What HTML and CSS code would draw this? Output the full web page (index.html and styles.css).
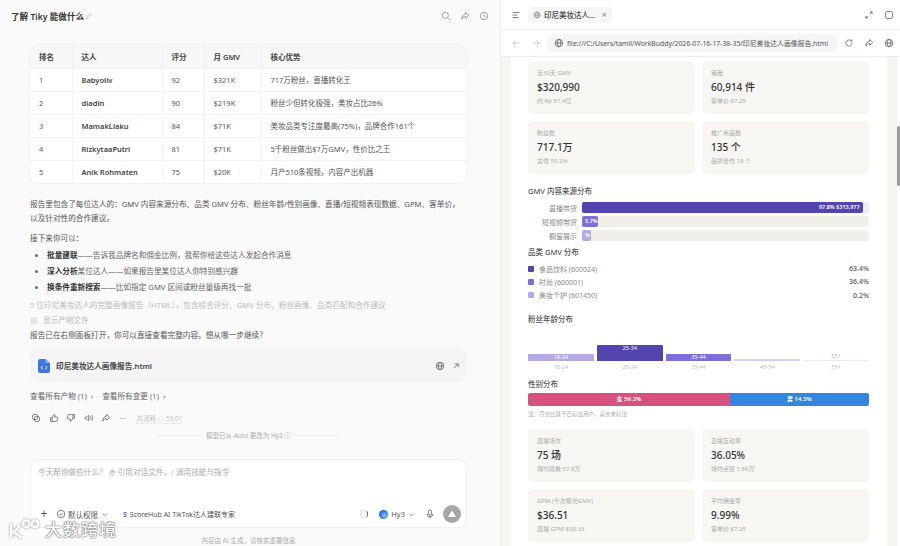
FILE: index.html
```html
<!DOCTYPE html>
<html lang="zh-CN">
  <head>
    <meta charset="UTF-8" />
    <title>了解 Tiky 能做什么</title>
    <link rel="stylesheet" href="styles.css">
  </head>
  <body>
    <div class="app">
      <section class="chat">
        <header class="chat-head">
          <div class="chat-title">
            <span>了解 Tiky 能做什么</span>
            <svg class="ico-sm" viewBox="0 0 16 16"><path d="M3 13l1-3.500L11 2.500l2.500 2.500-7 7z"/></svg>
          </div>
          <div class="head-icons">
            <svg class="ico" viewBox="0 0 16 16"><circle cx="7" cy="7" r="4.800"/><path d="M10.500 10.500L14 14"/></svg>
            <svg class="ico" viewBox="0 0 16 16"><path d="M9 2.500l5 4.500-5 4.500V9C6 9 4.500 10 3 13c0-4.500 2-7.500 6-8z"/></svg>
            <svg class="ico" viewBox="0 0 16 16"><circle cx="8" cy="8" r="6"/><path d="M8 4.500V8l2.500 1.500"/></svg>
          </div>
        </header>

        <div class="chat-body">
          <div class="table-wrap">
            <table class="rank">
              <thead>
                <tr><th class="c1">排名</th><th class="c2">达人</th><th class="c3">评分</th><th class="c4">月 GMV</th><th>核心优势</th></tr>
              </thead>
              <tbody>
                <tr><td>1</td><td class="name">Babyoliv</td><td>92</td><td>$321K</td><td>717万粉丝，直播转化王</td></tr>
                <tr><td>2</td><td class="name">diadin</td><td>90</td><td>$219K</td><td>粉丝少但转化极强，美妆占比26%</td></tr>
                <tr><td>3</td><td class="name">MamakLiaku</td><td>84</td><td>$71K</td><td>美妆品类专注度最高(75%)，品牌合作161个</td></tr>
                <tr><td>4</td><td class="name">RizkytaaPutri</td><td>81</td><td>$71K</td><td>5千粉丝做出$7万GMV，性价比之王</td></tr>
                <tr><td>5</td><td class="name">Anik Rohmaten</td><td>75</td><td>$20K</td><td>月产510条视频，内容产出机器</td></tr>
              </tbody>
            </table>
          </div>

          <p class="para">报告里包含了每位达人的：GMV 内容来源分布、品类 GMV 分布、粉丝年龄/性别画像、直播/短视频表现数据、GPM、客单价，以及针对性的合作建议。</p>
          <p class="next">接下来你可以：</p>
          <ul class="todo">
            <li><b>批量建联</b>——告诉我品牌名和佣金比例，我帮你给这些达人发起合作消息</li>
            <li><b>深入分析</b>某位达人——如果报告里某位达人你特别感兴趣</li>
            <li><b>换条件重新搜索</b>——比如指定 GMV 区间或粉丝量级再找一批</li>
          </ul>
          <p class="muted first">5 位印尼美妆达人的完整画像报告（HTML），包含综合评分、GMV 分布、粉丝画像、品类匹配和合作建议</p>
          <p class="muted show">
            <svg class="ico-sm" viewBox="0 0 16 16"><circle cx="8" cy="8" r="6"/><circle cx="8" cy="8" r="2.500"/></svg>
            <span>显示产物文件</span>
          </p>
          <p class="ask">报告已在右侧面板打开，你可以直接查看完整内容。想从哪一步继续？</p>

          <div class="file-card">
            <svg class="file-ico" viewBox="0 0 12 14"><path d="M2 0h5.500L12 4v8a2 2 0 0 1-2 2H2a2 2 0 0 1-2-2V2a2 2 0 0 1 2-2z" fill="#3f74d8"/><path d="M7.500 0L12 4H7.500z" fill="#8fb0ec"/><path d="M4.600 7L3.200 8.700l1.400 1.700M7.400 7l1.400 1.700-1.400 1.700" fill="none" stroke="#fff" stroke-width="1"/></svg>
            <span class="file-name">印尼美妆达人画像报告.html</span>
            <svg class="ico" viewBox="0 0 16 16"><circle cx="8" cy="8" r="6"/><ellipse cx="8" cy="8" rx="2.600" ry="6"/><path d="M2 8h12"/></svg>
            <svg class="ico" viewBox="0 0 16 16"><path d="M4.500 11.500L11.500 4.500M6 4.500h5.500V10"/></svg>
          </div>

          <div class="links">
            <span>查看所有产物 (1) &nbsp;›</span>
            <span>查看所有变更 (1) &nbsp;›</span>
          </div>

          <div class="actions">
            <svg class="ico" viewBox="0 0 16 16"><rect x="2.500" y="2.500" width="8" height="8" rx="2"/><rect x="5.500" y="5.500" width="8" height="8" rx="2"/></svg>
            <svg class="ico" viewBox="0 0 16 16"><path d="M2.500 7.500h2.500v6H2.500zM5 7.500L8 2.500c1.300 0 1.800 1 1.500 2L9 6.500h4c.8 0 1.200.7 1 1.500l-1.200 4.500c-.2.700-.6 1-1.300 1H5"/></svg>
            <svg class="ico" viewBox="0 0 16 16"><path d="M13.500 8.500H11v-6h2.500zM11 8.500L8 13.500c-1.300 0-1.800-1-1.500-2l.5-2H3c-.8 0-1.200-.7-1-1.500l1.200-4.500c.2-.7.600-1 1.300-1H11"/></svg>
            <svg class="ico" viewBox="0 0 16 16"><path d="M2 6.500v3h2L7.500 12.500v-9L4 6.500zM10 5.500c1 1.500 1 3.500 0 5M12.500 3.500c1.800 2.700 1.800 6.300 0 9"/></svg>
            <svg class="ico" viewBox="0 0 16 16"><path d="M9 2.500l5 4.500-5 4.500V9C6 9 4.500 10 3 13c0-4.500 2-7.500 6-8z"/></svg>
            <span class="dots">···</span>
            <span class="cost">共消耗 ◇ 59.01</span>
          </div>

          <div class="model-note">
            <i></i><span>模型已从 Auto 更改为 Hy3 ⓘ</span><i></i>
          </div>

          <div class="composer">
            <div class="hint">今天帮你做些什么？ @ 引用对话文件，/ 调用技能与指令</div>
            <div class="tools">
              <span class="plus">+</span>
              <svg class="ico" viewBox="0 0 16 16"><circle cx="8" cy="8" r="6"/><path d="M5.500 8l2 2 3-3.500"/></svg>
              <span class="tool-txt">默认权限</span>
              <svg class="chev" viewBox="0 0 8 8"><path d="M1.500 3l2.500 2.500L6.500 3"/></svg>
              <span class="skill"><b>S</b>ScoreHub AI TikTok达人建联专家</span>
              <span class="spin"></span>
              <span class="orb"></span>
              <span class="tool-txt">Hy3</span>
              <svg class="chev" viewBox="0 0 8 8"><path d="M1.500 3l2.500 2.500L6.500 3"/></svg>
              <svg class="ico mic" viewBox="0 0 16 16"><rect x="5.500" y="1.500" width="5" height="8.500" rx="2.500"/><path d="M3.500 8c0 3 2 4.500 4.500 4.500s4.500-1.500 4.500-4.500M8 12.500v2"/></svg>
              <span class="send"><svg viewBox="0 0 10 10"><path d="M5 1.500L9 8H1z"/></svg></span>
            </div>
          </div>
          <div class="foot-note">内容由 AI 生成，请核实重要信息</div>
        </div>

        <div class="mark">
          <svg viewBox="0 0 34 22"><path d="M3 6v15M3 15c4-1 7-4 9-8M5 15c3 1 6 3 9 6"/><circle cx="19" cy="6" r="3.500"/><circle cx="28" cy="6" r="3.500"/></svg>
          <span>大数跨境</span>
        </div>
      </section>

      <section class="viewer">
        <div class="tabbar">
          <svg class="ico" viewBox="0 0 16 16"><path d="M2.500 4h11M2.500 8h7.500M2.500 12h9.500"/></svg>
          <div class="tab">
            <svg class="ico-sm" viewBox="0 0 16 16"><circle cx="8" cy="8" r="6"/><ellipse cx="8" cy="8" rx="2.600" ry="6"/><path d="M2 8h12"/></svg>
            <span>印尼美妆达人...</span>
            <em>×</em>
          </div>
          <svg class="ico push" viewBox="0 0 16 16"><path d="M3 9.500v3.500h3.500M3 13l3.500-3.500M13 6.500V3H9.500M13 3L9.500 6.500"/></svg>
          <svg class="ico" viewBox="0 0 16 16"><rect x="2.500" y="2.500" width="11" height="11" rx="2.500"/></svg>
        </div>
        <div class="urlbar">
          <svg class="ico faint" viewBox="0 0 16 16"><path d="M13 8H3M7 4L3 8l4 4"/></svg>
          <svg class="ico faint" viewBox="0 0 16 16"><path d="M3 8h10M9 4l4 4-4 4"/></svg>
          <div class="url">
            <svg class="ico" viewBox="0 0 16 16"><circle cx="8" cy="8" r="6"/><ellipse cx="8" cy="8" rx="2.600" ry="6"/><path d="M2 8h12"/></svg>
            <span>file:///C:/Users/tamil/WorkBuddy/2026-07-16-17-38-35/印尼美妆达人画像报告.html</span>
          </div>
          <svg class="ico" viewBox="0 0 16 16"><path d="M13 8a5 5 0 1 1-1.500-3.600M13 2v3h-3"/></svg>
          <svg class="ico" viewBox="0 0 16 16"><path d="M9 2.500l5 4.500-5 4.500V9C6 9 4.500 10 3 13c0-4.500 2-7.500 6-8z"/></svg>
          <svg class="ico" viewBox="0 0 16 16"><circle cx="8" cy="8" r="6"/><ellipse cx="8" cy="8" rx="2.600" ry="6"/><path d="M2 8h12"/></svg>
        </div>

        <div class="report-scroll">
          <div class="report">
            <div class="stats">
              <div class="stat"><label>近30天 GMV</label><strong>$320,990</strong><small>约 Rp 51.4亿</small></div>
              <div class="stat"><label>销量</label><strong>60,914 件</strong><small>客单价 $7.25</small></div>
              <div class="stat"><label>粉丝数</label><strong>717.1万</strong><small>女性 59.2%</small></div>
              <div class="stat"><label>推广商品数</label><strong>135 个</strong><small>品牌合作 18 个</small></div>
            </div>

            <h3 class="h-gmv">GMV 内容来源分布</h3>
            <div class="src-row"><span>直播带货</span><div class="track"><div class="fill c-dark" style="width:97.8%">97.8% $313,977</div></div></div>
            <div class="src-row"><span>短视频带货</span><div class="track"><div class="fill c-mid" style="width:5.7%">5.7%</div></div></div>
            <div class="src-row"><span>橱窗展示</span><div class="track"><div class="fill c-light" style="width:3%">%</div></div></div>

            <h3 class="h-cat">品类 GMV 分布</h3>
            <div class="cat"><i class="c-dark"></i><span>食品饮料 (600024)</span><b>63.4%</b></div>
            <div class="cat"><i class="c-mid"></i><span>时尚 (600001)</span><b>36.4%</b></div>
            <div class="cat"><i class="c-light"></i><span>美妆个护 (601450)</span><b>0.2%</b></div>

            <h3 class="h-age">粉丝年龄分布</h3>
            <div class="ages">
              <div class="age"><div class="col c-light" style="height:7px">18-24</div><span>18-24</span></div>
              <div class="age"><div class="col c-dark" style="height:16px">25-34</div><span>25-34</span></div>
              <div class="age"><div class="col c-mid" style="height:7px">35-44</div><span>35-44</span></div>
              <div class="age"><div class="col c-pale" style="height:2px"></div><span>45-54</span></div>
              <div class="age"><em>55+</em><div class="col c-paler" style="height:1px"></div><span>55+</span></div>
            </div>

            <h3 class="h-sex">性别分布</h3>
            <div class="sex">
              <div class="female" style="width:59.2%">女 59.2%</div>
              <div class="male">男 14.5%</div>
            </div>
            <p class="sex-note">注：百分比基于已标注用户，其余未标注</p>

            <div class="stats">
              <div class="stat"><label>直播场次</label><strong>75 场</strong><small>场均观看 57.8万</small></div>
              <div class="stat"><label>直播互动率</label><strong>36.05%</strong><small>场均点赞 1.86万</small></div>
              <div class="stat"><label>GPM (千次曝光GMV)</label><strong>$36.51</strong><small>直播 GPM $38.33</small></div>
              <div class="stat"><label>平均佣金率</label><strong>9.99%</strong><small>客单价 $7.25</small></div>
            </div>
          </div>
          <div class="scrollbar"><div class="thumb"></div></div>
        </div>
      </section>
    </div>
  </body>
</html>
```

FILE: styles.css
```css
* {
  box-sizing: border-box;
  margin: 0;
  padding: 0;
}

html,
body {
  width: 900px;
  height: 546px;
  overflow: hidden;
}

body {
  background-color: #fafafa;
  color: #333;
  font-family: "Noto Sans", "Noto Sans CJK SC", sans-serif;
  font-size: 8px;
}

.app {
  display: flex;
  height: 546px;
}

svg {
  fill: none;
  stroke: currentColor;
  flex-shrink: 0;
}

.ico {
  width: 10px;
  height: 10px;
  stroke-width: 1.300;
  color: #666;
}

.ico-sm {
  width: 8px;
  height: 8px;
  stroke-width: 1.200;
  color: #777;
}

/* left panel */
.chat {
  position: relative;
  width: 501px;
  flex-shrink: 0;
  background-color: #fafafa;
  border-right: 1px solid #eee;
  overflow: hidden;
}

.chat-head {
  display: flex;
  align-items: center;
  justify-content: space-between;
  height: 32px;
  padding: 0 11px;
}

.chat-title {
  display: flex;
  align-items: center;
  gap: 1px;
  font-size: 8.600px;
  font-weight: 600;
  color: #333;
}

.chat-title .ico-sm {
  color: #aaa;
}

.head-icons {
  display: flex;
  gap: 9px;
}

.head-icons .ico {
  color: #888;
}

.chat-body {
  padding: 13px 33px 0 30px;
}

.table-wrap {
  background-color: #fff;
  box-shadow: 0 0 0 1px #f2f2f2;
  border-radius: 9px;
  overflow: hidden;
  height: 138px;
}

.rank {
  width: 100%;
  border-collapse: collapse;
  table-layout: fixed;
  font-size: 7.500px;
  color: #555;
}

.rank th {
  height: 23px;
  padding-left: 9px;
  background-color: #f7f7f7;
  font-weight: 600;
  text-align: left;
  color: #444;
  border-right: 1px solid #eee;
}

.rank td {
  height: 23px;
  padding-left: 9px;
  border-right: 1px solid #f3f3f3;
  border-top: 1px solid #f3f3f3;
}

.rank th:last-child,
.rank td:last-child {
  border-right: none;
}

.rank .name {
  font-weight: 600;
  color: #444;
}

.rank .c1 { width: 42px; }
.rank .c2 { width: 90px; }
.rank .c3 { width: 42px; }
.rank .c4 { width: 57px; }

.para {
  margin-top: 15px;
  font-size: 7.650px;
  line-height: 13.500px;
  color: #555;
}

.next {
  margin-top: 7px;
  font-size: 7.650px;
  line-height: 13px;
  color: #555;
}

.todo {
  margin-top: 2px;
  padding-left: 17px;
  font-size: 7.650px;
  line-height: 16px;
  color: #666;
}

.todo b {
  color: #333;
  font-weight: 700;
}

.muted {
  font-size: 7.650px;
  color: #bbb;
  line-height: 15px;
}

.muted.first {
  margin-top: 3px;
}

.show {
  display: flex;
  align-items: center;
  gap: 5px;
}

.show .ico-sm {
  color: #bbb;
}

.ask {
  font-size: 7.650px;
  line-height: 15px;
  color: #555;
}

.file-card {
  display: flex;
  align-items: center;
  gap: 6px;
  height: 33px;
  margin-top: 6px;
  padding: 0 6px 0 8px;
  background-color: #f4f4f4;
  border-radius: 8px;
}

.file-ico {
  width: 12px;
  height: 14px;
  stroke: none;
}

.file-name {
  flex: 1;
  font-size: 7.650px;
  font-weight: 600;
  color: #444;
}

.links {
  display: flex;
  gap: 9px;
  margin-top: 8px;
  font-size: 7.650px;
  line-height: 12px;
  color: #666;
}

.actions {
  display: flex;
  align-items: center;
  gap: 7.500px;
  margin-top: 10px;
  padding-left: 1px;
  height: 12px;
}

.dots {
  color: #888;
  font-size: 8px;
  margin-left: 1px;
}

.cost {
  margin-left: 3px;
  font-size: 6.500px;
  color: #c4c4c4;
  border-bottom: 1px dotted #ddd;
}

.model-note {
  display: flex;
  align-items: center;
  justify-content: center;
  gap: 3px;
  margin-top: 5px;
  height: 12px;
  font-size: 6.500px;
  color: #aaa;
}

.model-note i {
  width: 46px;
  height: 1px;
  background-color: #efefef;
}

.composer {
  display: flex;
  flex-direction: column;
  justify-content: space-between;
  height: 69px;
  margin-top: 18px;
  padding: 6px 5px 4px 7px;
  background-color: #fff;
  border: 1px solid #f0f0f0;
  border-radius: 9px;
}

.hint {
  font-size: 7.650px;
  color: #aaa;
}

.tools {
  display: flex;
  align-items: center;
  gap: 2px;
  height: 18px;
}

.plus {
  width: 12px;
  margin-right: 4px;
  font-size: 12px;
  line-height: 12px;
  text-align: center;
  color: #555;
}

.tool-txt {
  font-size: 7.500px;
  color: #555;
}

.chev {
  width: 7px;
  height: 7px;
  stroke-width: 1;
  color: #777;
  margin-left: 1px;
}

.skill {
  flex: 1;
  margin-left: 13px;
  font-size: 7px;
  color: #555;
}

.skill b {
  color: #6a5acd;
  margin-right: 3px;
}

.spin {
  width: 8px;
  height: 8px;
  margin-right: 9px;
  border: 1px solid #ddd;
  border-right-color: #666;
  border-radius: 50%;
}

.orb {
  width: 9px;
  height: 9px;
  margin-right: 1px;
  border-radius: 50%;
  background: radial-gradient(circle at 60% 60%, #8ec5ff, #1c66d8 65%);
}

.mic {
  margin-left: 8px;
  color: #555;
}

.send {
  display: flex;
  align-items: center;
  justify-content: center;
  width: 18px;
  height: 18px;
  margin-left: 6px;
  border-radius: 50%;
  background-color: #a6a6a6;
}

.send svg {
  width: 10px;
  height: 10px;
  fill: #fff;
  stroke: none;
}

.foot-note {
  margin-top: 7px;
  font-size: 6.500px;
  text-align: center;
  color: #aaa;
}

/* watermark over the corner */
.mark {
  position: absolute;
  left: 8px;
  top: 518px;
  display: flex;
  align-items: flex-end;
  gap: 4px;
  color: #fff;
}

.mark svg {
  width: 33px;
  height: 21px;
  stroke-width: 2.500;
  filter: drop-shadow(0 0 1px #888);
}

.mark span {
  font-size: 17px;
  line-height: 19px;
  font-weight: 500;
  letter-spacing: 1px;
  text-shadow: 0 0 1px #666, 0 0 1px #666, 0 0 2px #999;
}

/* right panel */
.viewer {
  display: flex;
  flex-direction: column;
  flex: 1;
  min-width: 0;
  background-color: #fff;
}

.tabbar {
  display: flex;
  align-items: center;
  gap: 6px;
  height: 29px;
  padding: 0 6px 0 10px;
}

.tab {
  display: flex;
  align-items: center;
  gap: 3px;
  width: 84px;
  height: 16px;
  margin-left: 1px;
  padding: 0 5px 0 5px;
  background-color: #f6f6f6;
  border-radius: 4px;
  font-size: 7.500px;
  font-weight: 500;
  color: #444;
}

.tab em {
  margin-left: auto;
  font-style: normal;
  font-size: 9px;
  color: #888;
}

.push {
  margin-left: auto;
  margin-right: 4px;
}

.urlbar {
  display: flex;
  align-items: center;
  gap: 10px;
  height: 28px;
  padding: 0 6px 0 10px;
  border-top: 1px solid #f0f0f0;
  border-bottom: 1px solid #ececec;
}

.faint {
  color: #bbb;
}

.url {
  display: flex;
  align-items: center;
  gap: 3px;
  flex-shrink: 0;
  width: 291px;
  height: 18px;
  margin: 0 -4px;
  padding: 0 5px 0 7px;
  background-color: #f6f6f6;
  border-radius: 5px;
  font-size: 6.850px;
  color: #555;
  white-space: nowrap;
  overflow: hidden;
}

.report-scroll {
  position: relative;
  flex: 1;
  display: flex;
  padding: 0 13px 0 10px;
  background-color: #f5f5f0;
  overflow: hidden;
}

.report {
  flex: 1;
  min-width: 0;
  padding: 4px 18px 0 17px;
  background-color: #fff;
}

.stats {
  display: grid;
  grid-template-columns: 1fr 1fr;
  grid-auto-rows: 53px;
  gap: 7px;
}

.stat {
  display: flex;
  flex-direction: column;
  padding: 8px 9px;
  background-color: #f7f6f3;
  border-radius: 5px;
}

.stat label {
  font-size: 6px;
  line-height: 9px;
  color: #aaa;
}

.stat strong {
  margin-top: 3px;
  font-size: 10px;
  line-height: 13px;
  font-weight: 500;
  color: #333;
}

.stat small {
  margin-top: 3px;
  font-size: 6px;
  line-height: 9px;
  color: #aaa;
}

h3 {
  font-size: 7.500px;
  line-height: 11px;
  font-weight: 500;
  color: #555;
}

.h-gmv { margin-top: 12px; margin-bottom: 5px; }
.h-cat { margin-top: 6px; margin-bottom: 4px; }
.h-age { margin-top: 12px; margin-bottom: 0; }
.h-sex { margin-top: 7px; margin-bottom: 3px; }

.src-row {
  display: flex;
  align-items: center;
  gap: 5px;
  height: 11px;
  margin-bottom: 3px;
}

.src-row > span {
  width: 49px;
  flex-shrink: 0;
  font-size: 7px;
  text-align: right;
  white-space: nowrap;
  color: #888;
}

.track {
  flex: 1;
  height: 11px;
  border-radius: 2px;
  background-color: #f0f0e8;
}

.fill {
  height: 11px;
  padding: 0 3px;
  border-radius: 2px;
  font-size: 5.500px;
  line-height: 11px;
  font-weight: 600;
  text-align: right;
  color: #fff;
  white-space: nowrap;
}

.c-dark { background-color: #5245ad; }
.c-mid { background-color: #7d6fd6; }
.c-light { background-color: #b5a9e8; }
.c-pale { background-color: #d5cff3; }
.c-paler { background-color: #ebe8f9; }

.cat {
  display: flex;
  align-items: center;
  height: 13.300px;
  font-size: 7px;
  color: #888;
}

.cat i {
  width: 6px;
  height: 6px;
  margin-right: 5px;
  border-radius: 1px;
}

.cat b {
  margin-left: auto;
  font-weight: 500;
  color: #555;
}

.ages {
  display: grid;
  grid-template-columns: repeat(5, 1fr);
  gap: 3px;
  align-items: end;
  height: 47px;
}

.age {
  text-align: center;
  font-size: 5.500px;
  color: #bbb;
}

.age > span {
  display: block;
  margin-top: 2px;
  line-height: 9px;
}

.age em {
  display: block;
  font-style: normal;
  line-height: 8px;
}

.col {
  border-radius: 1px 1px 0 0;
  line-height: 7px;
  color: #fff;
  overflow: hidden;
}

.sex {
  display: flex;
  height: 13px;
  border-radius: 2px;
  overflow: hidden;
  font-size: 6px;
  line-height: 13px;
  text-align: center;
  color: #fff;
  font-weight: 600;
}

.female {
  background-color: #d5527e;
}

.male {
  flex: 1;
  background-color: #3585de;
}

.sex-note {
  margin-top: 4px;
  margin-bottom: 11px;
  font-size: 5.500px;
  line-height: 8px;
  color: #aaa;
}

/* scrollbar at panel edge */
.scrollbar {
  position: absolute;
  right: 0;
  top: 0;
  bottom: 0;
  width: 3px;
  background-color: #fcfcfc;
}

.thumb {
  height: 60px;
  margin-top: 69px;
  background-color: #999;
  border-radius: 2px;
}
```
